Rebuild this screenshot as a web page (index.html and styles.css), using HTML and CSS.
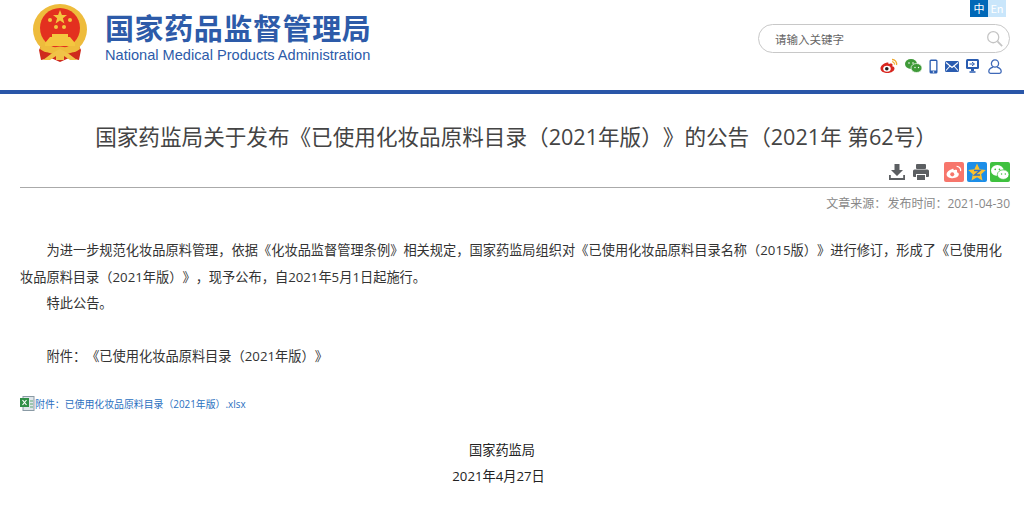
FILE: index.html
```html
<!DOCTYPE html>
<html lang="zh">
<head>
<meta charset="utf-8">
<title>国家药监局公告</title>
<link rel="stylesheet" href="styles.css">
</head>
<body>
<header class="header">
  <div class="brand">
    <svg class="emblem" width="54" height="62" viewBox="0 0 54 62">
      <path d="M10 38 L6 46 L8 56 L18 54 L27 58 L36 54 L46 56 L48 46 L44 38 Z" fill="#cf2a1c"/>
      <ellipse cx="27" cy="25.500" rx="27" ry="25.500" fill="#eebc3c"/>
      <circle cx="27" cy="24" r="20" fill="#e3301f"/>
      <polygon points="27,6 28.900,11 34,11 29.900,14.200 31.400,19.500 27,16.400 22.600,19.500 24.100,14.200 20,11 25.100,11" fill="#f4c63f"/>
      <circle cx="17" cy="16" r="2" fill="#f4c63f"/><circle cx="37" cy="16" r="2" fill="#f4c63f"/>
      <circle cx="23" cy="23" r="2" fill="#f4c63f"/><circle cx="31" cy="23" r="2" fill="#f4c63f"/>
      <path d="M19 30h16v3h2l5 6v3H12v-3l5-6h2z" fill="#f4c63f"/>
      <path d="M8 40q6 6 12 4q7-3 14 0q6 2 12-4l1 5q-6 5-13 3q-7-3-14 0q-7 2-13-3z" fill="#eebc3c"/>
      <path d="M10 56l8-6 5-3 4-2 4 2 5 3 8 6-7 0-6-4v4h-8v-4l-6 4z" fill="#f0c347"/>
    </svg>
    <div class="brand-text">
      <div class="brand-cn">国家药品监督管理局</div>
      <div class="brand-en">National Medical Products Administration</div>
    </div>
  </div>
  <div class="tools">
    <div class="lang"><span class="lang-cn">中</span><span class="lang-en">En</span></div>
    <div class="search">
      <span class="search-text">请输入关键字</span>
      <svg width="17" height="17" viewBox="0 0 20 20" fill="none" stroke="#c4c4c4"><circle cx="8.500" cy="8.500" r="6.500" stroke-width="1.500"/><path d="M13.500 13.500L19 19" stroke-width="2"/></svg>
    </div>
    <div class="social">
      <svg width="18" height="16" viewBox="0 0 18 16"><path d="M7 4.500C3 5.500 0.500 8 0.500 10.500C0.500 13.500 4 15 7.500 15C11.500 15 14.500 12.800 14.500 10.500C14.500 9 13 8.500 12.300 8.300C12.800 7 12.800 5.800 11.500 5.500C10.500 5.300 9 5.800 8.500 6C8.800 4.500 8 4.200 7 4.500Z" fill="#d8261f"/><ellipse cx="7" cy="10.700" rx="3.800" ry="3" fill="#fff"/><circle cx="6.800" cy="10.700" r="1.800" fill="#222"/><path d="M12 1.500a4.500 4.500 0 0 1 4.500 5.500" fill="none" stroke="#f0a92e" stroke-width="1.400"/><path d="M12 3.800a2.300 2.300 0 0 1 2.400 2.800" fill="none" stroke="#f0a92e" stroke-width="1.100"/></svg>
      <svg width="17" height="14" viewBox="0 0 17 14"><ellipse cx="6" cy="5" rx="6" ry="5" fill="#3f9a38"/><ellipse cx="11.500" cy="9" rx="5.500" ry="4.500" fill="#3f9a38" stroke="#fff" stroke-width=".7"/><circle cx="4" cy="4" r=".8" fill="#fff"/><circle cx="8" cy="4" r=".8" fill="#fff"/><circle cx="10" cy="8.500" r=".7" fill="#fff"/><circle cx="13.500" cy="8.500" r=".7" fill="#fff"/></svg>
      <svg width="9" height="15" viewBox="0 0 9 15"><rect x=".5" y=".5" width="8" height="14" rx="1.500" fill="#2a5cb0"/><rect x="1.800" y="2" width="5.400" height="9.500" fill="#fff"/><circle cx="4.500" cy="13" r=".8" fill="#fff"/></svg>
      <svg width="14" height="11" viewBox="0 0 14 11"><rect width="14" height="11" rx="1.500" fill="#2a5cb0"/><path d="M1 1.500L7 6.500L13 1.500M1 9.500L5 5M13 9.500L9 5" fill="none" stroke="#fff" stroke-width="1.100"/></svg>
      <svg width="13" height="14" viewBox="0 0 13 14"><rect width="13" height="10" rx="1.500" fill="#2a5cb0"/><rect x="2" y="2" width="9" height="6" fill="#fff"/><path d="M3.500 5h4M6 3.200L8.500 5L6 6.800" fill="none" stroke="#2a5cb0"/><path d="M5 10h3v2H5z" fill="#2a5cb0"/><path d="M3.500 13h6" stroke="#2a5cb0" stroke-width="1.500"/></svg>
      <svg class="social-user" width="14" height="15" viewBox="0 0 14 15" fill="none" stroke="#3f69b8" stroke-width="1.300"><circle cx="7" cy="4.500" r="3.600"/><path d="M5 8.200C2.500 9 .8 10.800 .8 12.500C.8 13.700 1.500 14.300 2.500 14.300H11.500C12.500 14.300 13.200 13.700 13.200 12.500C13.200 10.800 11.500 9 9 8.200"/></svg>
    </div>
  </div>
</header>
<main class="article">
  <h1 class="title">国家药监局关于发布《已使用化妆品原料目录（2021年版）》的公告（2021年 第62号）</h1>
  <div class="actions">
    <svg width="16" height="16" viewBox="0 0 16 16" fill="#5c5f62"><path d="M5.500 0h5v6h3.500L8 12L2 6h3.500z"/><path d="M0 11v5h16v-5h-1.800v3H1.800v-3z"/></svg>
    <svg class="print" width="16" height="16" viewBox="0 0 16 16" fill="#5c5f62"><rect x="3" y="0" width="10" height="5" rx="1"/><path d="M1.500 5.500h13a1.500 1.500 0 0 1 1.500 1.500v5a1 1 0 0 1-1 1h-2v-3H3v3H1a1 1 0 0 1-1-1V7a1.500 1.500 0 0 1 1.500-1.500z"/><rect x="4" y="11" width="8" height="5"/></svg>
    <span class="share share-weibo"><svg width="16" height="14" viewBox="0 0 18 16"><path d="M7 4.500C3 5.500 .5 8 .5 10.500C.5 13.500 4 15 7.500 15C11.500 15 14.500 12.800 14.500 10.500C14.500 9 13 8.500 12.300 8.300C12.800 7 12.800 5.800 11.500 5.500C10.500 5.300 9 5.800 8.500 6C8.800 4.500 8 4.200 7 4.500Z" fill="#fff"/><circle cx="7" cy="10.700" r="2.300" fill="#f7766c"/><path d="M12 1.500a4.500 4.500 0 0 1 4.500 5.500" fill="none" stroke="#fff" stroke-width="1.400"/></svg></span>
    <span class="share share-qzone"><svg width="18" height="18" viewBox="0 0 18 18"><polygon points="9,0.500 11.600,6.300 17.800,7 13.200,11.300 14.500,17.500 9,14.300 3.500,17.500 4.800,11.300 .2,7 6.400,6.300" fill="#fac02d"/><path d="M6 7.500h6L6.500 12h5.500" fill="none" stroke="#2f6fc0" stroke-width="1.300"/></svg></span>
    <span class="share share-wechat"><svg width="18" height="15" viewBox="0 0 17 14"><ellipse cx="6" cy="5" rx="6" ry="5" fill="#fff"/><ellipse cx="11.500" cy="9" rx="5.500" ry="4.500" fill="#fff" stroke="#3fc13f" stroke-width=".7"/><circle cx="4" cy="4" r=".8" fill="#3fc13f"/><circle cx="8" cy="4" r=".8" fill="#3fc13f"/><circle cx="10" cy="8.500" r=".7" fill="#3fc13f"/><circle cx="13.500" cy="8.500" r=".7" fill="#3fc13f"/></svg></span>
  </div>
  <div class="meta"><span>文章来源：</span><span>发布时间：2021-04-30</span></div>
  <div class="body">
    <p class="para">为进一步规范化妆品原料管理，依据《化妆品监督管理条例》相关规定，国家药监局组织对《已使用化妆品原料目录名称（2015版）》进行修订，形成了《已使用化妆品原料目录（2021年版）》，现予公布，自2021年5月1日起施行。</p>
    <p class="para">特此公告。</p>
    <p class="para blank">&nbsp;</p>
    <p class="para">附件：《已使用化妆品原料目录（2021年版）》</p>
  </div>
  <div class="attach">
    <svg width="15" height="15" viewBox="0 0 15 15"><rect x="3" y=".5" width="11" height="14" fill="#dfe6ea" stroke="#8a9aa5"/><rect x="0" y="2" width="9" height="9" fill="#2f8f46"/><path d="M2.500 4l4 5M6.500 4l-4 5" stroke="#fff" stroke-width="1.200"/><path d="M10 5h3M10 8h3M10 11h3" stroke="#5fa777"/></svg>
    <span>附件：已使用化妆品原料目录（2021年版）.xlsx</span>
  </div>
  <div class="sign">
    <p>国家药监局</p>
    <p class="sign-date">2021年4月27日</p>
  </div>
</main>
</body>
</html>
```
FILE: styles.css
```css
* { box-sizing: border-box; }
html, body { margin: 0; padding: 0; height: 520px; overflow: hidden; background: #fff; }
body { font-family: "Open Sans", "Noto Sans CJK SC", sans-serif; color: #333; text-spacing-trim: space-all; }
.header {
  height: 94px;
  border-bottom: 4px solid #2a56a8;
  display: flex;
  justify-content: space-between;
  padding: 0 14px 0 33px;
}
.brand { display: flex; align-items: flex-start; gap: 18px; padding-top: 4px; }
.brand-text { display: flex; flex-direction: column; padding-top: 5px; }
.brand-cn {
  font-family: "Noto Sans CJK SC", sans-serif;
  font-weight: 700;
  font-size: 29px;
  letter-spacing: .6px;
  line-height: 36px;
  color: #2d5ba9;
  white-space: nowrap;
}
.brand-en {
  font-family: "Liberation Sans", sans-serif;
  font-size: 14.6px;
  line-height: 18px;
  margin-top: 1px;
  color: #2d5ba9;
  white-space: nowrap;
}
.tools { display: flex; flex-direction: column; align-items: flex-end; }
.lang { display: flex; margin-right: 4px; font-size: 11px; line-height: 17px; height: 17px; font-family: "Noto Sans CJK SC", sans-serif; }
.lang-cn { width: 18px; text-align: center; background: #0068b7; color: #fff; }
.lang-en { width: 18px; text-align: center; background: #c9e6fb; color: #fff; }
.search {
  width: 252px;
  height: 29px;
  margin-top: 7px;
  border: 1px solid #c8c8c8;
  border-radius: 15px;
  display: flex;
  align-items: center;
  justify-content: space-between;
  padding: 0 6px 0 16px;
}
.search-text { font-size: 11.5px; color: #666; font-family: "Noto Sans CJK SC", sans-serif; }
.social { display: flex; align-items: center; gap: 7px; height: 20px; margin-top: 3px; margin-right: 8px; }
.social-user { margin-left: 2px; }
.article { padding: 0 14px 0 20px; }
.title {
  margin: 29px 0 0;
  padding-left: 2px;
  font-size: 21.6px;
  font-weight: 400;
  line-height: 28px;
  text-align: center;
  color: #444;
  white-space: nowrap;
}
.actions {
  display: flex;
  justify-content: flex-end;
  align-items: center;
  height: 28px;
  margin-top: 9px;
  gap: 8px;
  border-bottom: 1px solid #aaa;
  padding-bottom: 3px;
}
.print { margin-right: 7px; }
.share { width: 20px; height: 20px; border-radius: 2px; display: flex; align-items: center; justify-content: center; margin-left: -5px; }
.share + .share { margin-left: -5px; }
.share-weibo { background: #f7766c; margin-left: 0; }
.share-qzone { background: #1c8ee8; }
.share-wechat { background: #3fc13f; }
.meta { display: flex; justify-content: flex-end; gap: 1px; font-size: 12px; line-height: 16px; margin-top: 8px; color: #888; }
.body { margin-top: 25px; font-size: 13.23px; color: #333; }
.para { margin: 0; line-height: 26.500px; text-indent: 26.500px; }
.attach { display: flex; align-items: center; margin-top: 24px; height: 20px; font-size: 9.9px; color: #2a6fc0; gap: 0; }
.sign { margin-top: 23px; padding-right: 26px; text-align: center; font-size: 13.2px; color: #222; }
.sign p { margin: 0; line-height: 26.500px; }
.sign .sign-date { padding-right: 7px; }
```
